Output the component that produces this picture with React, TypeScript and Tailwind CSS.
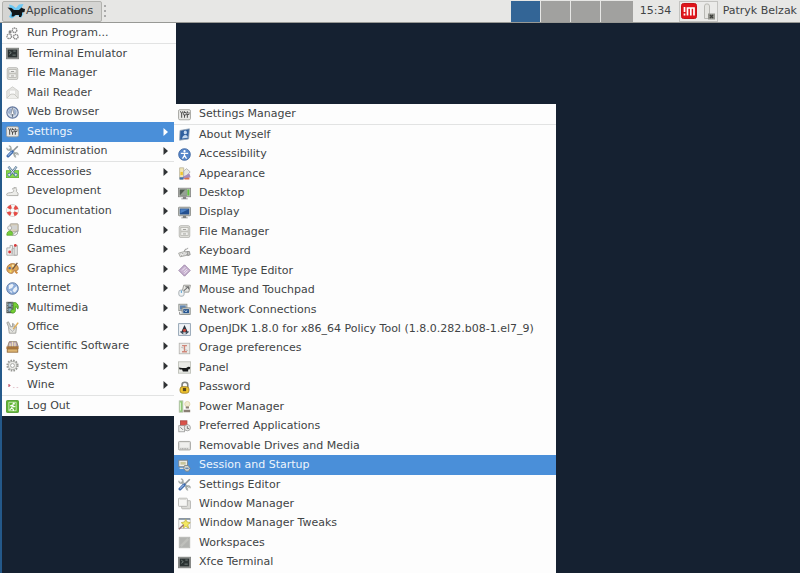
import type { ReactNode } from "react";

type Item = { label: string; icon: string; arrow?: boolean; active?: boolean };

const toggles = (
  <>
    <rect x="0.6" y="2" width="14.8" height="12.5" rx="1.8" fill="#e6e6e4" stroke="#9c9c98" />
    <path d="M3 4l1.5 3L6 4M4.5 7v5M8 4v8M11.5 4v8" stroke="#3a3a3a" strokeWidth="1.1" fill="none" />
    <path d="M7 5.5h3v3H7zM10.5 8h3v-3" stroke="#3a3a3a" strokeWidth="1" fill="#fff" />
  </>
);
const terminal = (
  <>
    <rect x="0.5" y="1.5" width="15" height="13" fill="#8e908e" stroke="#7c7e7c" />
    <rect x="2.2" y="3.2" width="11.6" height="9.6" fill="#2b3232" />
    <path d="M4 5l2.5 2L4 9M8 10h4M9 5h3" stroke="#83908d" fill="none" />
  </>
);
const cabinet = (
  <>
    <rect x="1.5" y="0.8" width="13" height="14.7" rx="2" fill="#deded9" stroke="#b2b2ad" />
    <rect x="3.5" y="3" width="9" height="4.5" fill="#f4f4f1" stroke="#b5b5b0" />
    <rect x="3.5" y="8.5" width="9" height="4.5" fill="#f4f4f1" stroke="#b5b5b0" />
    <path d="M6 5.5h4M6 11h4" stroke="#8a8a86" />
  </>
);
const tools = (
  <>
    <path d="M4 4l8.5 8.5" stroke="#8f9693" strokeWidth="3" />
    <path d="M4 4l8.5 8.5" stroke="#e3e7e5" strokeWidth="1.6" />
    <path d="M1 3.5c0 3 3 3.5 4.5 2S6 1.5 3.5 1.2" stroke="#a0a6a3" strokeWidth="1.6" fill="none" />
    <path d="M15 12.5c0-3-3-3.5-4.5-2s0 4.2 2 4.3" stroke="#a0a6a3" strokeWidth="1.6" fill="none" />
    <path d="M14.5 1.5L8 8" stroke="#8b9296" strokeWidth="2" />
    <path d="M7.5 8.5L2.5 13.5" stroke="#3f6cae" strokeWidth="3.8" strokeLinecap="round" />
    <path d="M7 8.5l-4.500 4.500" stroke="#9cbbe4" strokeWidth="1.4" />
  </>
);

const icons: Record<string, ReactNode> = {
  toggles,
  terminal,
  cabinet,
  tools,
  run: (
    <g fill="none" stroke="#858585" strokeWidth="1.7">
      <circle cx="10.5" cy="4" r="2.8" strokeDasharray="1.6 .6" />
      <circle cx="4" cy="11.5" r="2.8" strokeDasharray="1.6 .6" />
      <circle cx="12" cy="12" r="2.8" strokeDasharray="1.6 .6" />
      <circle cx="5" cy="6" r="1" />
    </g>
  ),
  mail: (
    <>
      <path d="M1 6l7-5 7 5v9H1z" fill="#e7e7e4" stroke="#c8c8c4" />
      <path d="M4 5h8v5l-4 2-4-2z" fill="#fafaf9" stroke="#d5d5d1" />
      <path d="M1 15l5-5h4l5 5" fill="#eeeeeb" stroke="#c0c0bb" />
    </>
  ),
  web: (
    <>
      <circle cx="8" cy="8" r="7" fill="#d3ddea" stroke="#6579a0" strokeWidth="1.4" />
      <path d="M4 4c3-2 4 0 3 3l-3 3-2-2zM10 3l3 3-1 5-3-2z" fill="#9db1cf" />
      <path d="M8 2l2 9H6z" fill="#fff" stroke="#6c7686" strokeWidth=".8" />
      <path d="M8 10v4" stroke="#4e5e75" />
    </>
  ),
  accessories: (
    <>
      <rect x="0.5" y="7" width="15" height="8.5" fill="#86d84b" stroke="#64b32d" />
      <path d="M3 2l8 10M13 2L5 12" stroke="#4f7391" strokeWidth="2.8" />
      <path d="M3 2l8 10M13 2L5 12" stroke="#e3eaf0" strokeWidth="1.2" />
      <circle cx="4" cy="12" r="1.9" fill="#e9f3e2" stroke="#3b7097" />
      <circle cx="12" cy="12" r="1.9" fill="#e9f3e2" stroke="#3b7097" />
    </>
  ),
  development: (
    <>
      <path d="M0.8 12c0-3 4-2 7-3 2.500-1 2-3 0-4l2-2c3 0 4 2 3 5l2 2v3H3c-1.500 0-2.200 0-2.200-1z" fill="#ecece9" stroke="#a5a5a0" />
      <path d="M9 4.500l4-1.500" stroke="#b2b2ae" />
    </>
  ),
  documentation: (
    <>
      <circle cx="8" cy="8" r="5.2" fill="none" stroke="#b9bab7" strokeWidth="5" />
      <circle cx="8" cy="8" r="5.2" fill="none" stroke="#f7f7f5" strokeWidth="4" />
      <circle cx="8" cy="8" r="5.2" fill="none" stroke="#e54a44" strokeWidth="4.4" strokeDasharray="4.08 4.08" strokeDashoffset="-2" />
    </>
  ),
  education: (
    <>
      <rect x="5" y="1" width="10" height="10" rx="1" fill="#d9cfb9" stroke="#9c9a92" />
      <rect x="7" y="3" width="6.500" height="5" fill="#d2d3d3" />
      <circle cx="4.500" cy="6" r="2.500" fill="#f0f0ee" stroke="#a5a5a5" />
      <path d="M1 15c0-7 7-7 8 0z" fill="#78cf3c" stroke="#57a22c" />
      <path d="M8 14.500l6-5v4l-3 2z" fill="#f4f4f2" stroke="#9a9a9a" />
    </>
  ),
  games: (
    <>
      <path d="M1 6h4V3h3v4h5v8H1z" fill="#f0f0ee" stroke="#a2a2a2" />
      <path d="M10 4l4-1v12h-4z" fill="#e3e3e1" stroke="#a8a8a8" />
      <circle cx="4.500" cy="11" r="1.800" fill="#d83a3c" />
      <circle cx="11.500" cy="3" r="1.700" fill="#d83a3c" />
      <path d="M7.500 7v7" stroke="#888" />
    </>
  ),
  graphics: (
    <>
      <path d="M1 9c0-9 13-9 14-2 1 6-6 2-6 5 0 4-8 2-8-3z" fill="#dda558" stroke="#a9743c" />
      <circle cx="4.500" cy="7.500" r="1.500" fill="#3f6fae" />
      <circle cx="8.500" cy="4.500" r="1.500" fill="#f7e7a9" />
      <circle cx="5.500" cy="11.500" r="1.300" fill="#f5e35f" />
      <path d="M14 1L8 9" stroke="#6b5442" strokeWidth="1.600" />
      <path d="M11 11l3 3" stroke="#d08a3c" strokeWidth="2.400" />
    </>
  ),
  internet: (
    <>
      <circle cx="8" cy="8" r="7.2" fill="#8eadd9" stroke="#56749f" />
      <path d="M3.500 4l4-2 2 2-2 3.500-4 1.500zM9.500 8l3.500-3 1 4-3 4-3-2zM4 10l3 1.500v2.500z" fill="#eaf1f9" />
    </>
  ),
  multimedia: (
    <>
      <rect x="0.5" y="1" width="8.500" height="14" fill="#525b5b" />
      <path d="M2 2v12M7.500 2v12" stroke="#dce4df" strokeDasharray="1 1" />
      <rect x="3" y="3" width="3.500" height="4" fill="#8aaec4" />
      <rect x="3" y="9" width="3.500" height="4" fill="#8aaec4" />
      <path d="M9 2h3c3 2 4 5 2.500 8-1-2-1.500-3-3-3v5c0 4-7 3.500-5.500 0 1-2 3-1.500 3-1.500z" fill="#76cf35" stroke="#43941d" />
    </>
  ),
  office: (
    <>
      <path d="M3 7h10l-1 8H4z" fill="#e4e4df" stroke="#999994" />
      <path d="M3 7L1 2l2-1 3 6M8 7V3l2 1v3" fill="#d6d7d2" stroke="#969691" />
      <path d="M9 10l6-8" stroke="#e0ad55" strokeWidth="2" />
      <path d="M4 9l4 4 4-5" stroke="#aaa" fill="none" />
    </>
  ),
  science: (
    <>
      <path d="M2 8l2-6h9l2 6z" fill="#b29cb8" stroke="#8b7a5e" />
      <path d="M5 4v4M8 2v6M11 3v5" stroke="#ecdfb6" strokeWidth="1.7" />
      <rect x="0.5" y="8" width="15" height="3" fill="#aa743a" />
      <rect x="1.5" y="11" width="13" height="4" fill="#ddb572" stroke="#8f6433" />
    </>
  ),
  system: (
    <>
      <circle cx="8" cy="8" r="6.4" fill="none" stroke="#979894" strokeWidth="2.2" strokeDasharray="2 1.350" />
      <circle cx="8" cy="8" r="5" fill="#ecece9" stroke="#9d9e99" />
      <circle cx="8" cy="8" r="2.400" fill="#fff" stroke="#9d9e99" />
    </>
  ),
  wine: (
    <>
      <path d="M3.500 6.500L5 8l-1.500 1.500z" fill="#c8455a" stroke="#bb5365" />
      <path d="M8.500 10.500h2M13 10.500h2" stroke="#dcb9c1" />
    </>
  ),
  logout: (
    <>
      <rect x="0.5" y="0.5" width="15" height="15" rx="1.5" fill="#60b532" stroke="#439020" />
      <path d="M3.500 2.800h9v10.400h-9z" fill="none" stroke="#d9f0cb" />
      <circle cx="9.500" cy="4.500" r="1.400" fill="#fff" />
      <path d="M5 7.500l3-1.500 1.500 2.500 2-.5M8 6.500l-1 3.500 2 1.500v2M7 10l-2.500 2" stroke="#fff" strokeWidth="1.400" fill="none" />
    </>
  ),
  about: (
    <>
      <path d="M2.500 3l11.500-2-1 12.500-11 1.500z" fill="#2f5f9e" stroke="#96a5b5" />
      <ellipse cx="9" cy="5.500" rx="1.900" ry="2.300" fill="#c3d7ee" />
      <path d="M5 13c.5-3 2-4 4-4.300 2 0 3 1 3 3.300z" fill="#c3d7ee" />
    </>
  ),
  accessibility: (
    <>
      <circle cx="8" cy="8" r="7.2" fill="#5586ca" stroke="#3b639c" />
      <circle cx="8" cy="4" r="1.4" fill="#fff" />
      <path d="M3.5 6.5h9M8 6v4M8 9l-2.5 4M8 9l2.5 4" stroke="#fff" strokeWidth="1.5" />
    </>
  ),
  appearance: (
    <>
      <path d="M2 1h5v14H2z" fill="#f2e6b4" stroke="#b8b09a" />
      <path d="M3 6h3v4H3z" fill="#efc52f" />
      <path d="M7 5l3.500-3 4.500 4-8 8z" fill="#e6e6e3" stroke="#aaa" />
      <path d="M6 12l8-4 1.500 4.500-9 2.500z" fill="#a58bbd" />
      <path d="M2 12.500h5l-1 3H2z" fill="#3f6fae" />
      <path d="M8 13.500l6-.5v2.500H8z" fill="#d9734b" />
    </>
  ),
  desktop: (
    <>
      <rect x="0.5" y="1.5" width="15" height="10.5" fill="#c2c3c0" stroke="#868784" />
      <rect x="2" y="3" width="9" height="7.500" fill="#4f5c50" />
      <path d="M2 10.500L9 3h2v7.500z" fill="#96a194" />
      <path d="M11.500 3H14v7.500h-2.500z" fill="#5fc13c" />
      <path d="M6 12h4v2h2v1H4v-1h2z" fill="#858585" />
    </>
  ),
  display: (
    <>
      <rect x="0.5" y="1.5" width="15" height="10.5" rx="1" fill="#c6c8c4" stroke="#80827e" />
      <rect x="2.2" y="3.2" width="11.600" height="7.200" fill="#24508f" />
      <path d="M3 4h10l-10 5z" fill="#4b80c4" />
      <path d="M6 12h4v2h2v1H4v-1h2z" fill="#808280" />
    </>
  ),
  keyboard: (
    <>
      <path d="M0.800 10l9-2.500 4 4.500-11 2.500z" fill="#ececea" stroke="#969793" />
      <path d="M3 11l7-1.500M4 13l8-1.500" stroke="#999" strokeWidth="1.100" strokeDasharray="1 1" />
      <path d="M8 7.500c0-4 4-1 4-4M11 8h3l1 4-3 1z" fill="#c4c4c0" stroke="#8a8a8a" />
    </>
  ),
  mime: (
    <>
      <path d="M8 1l7 7-7 7-7-7z" fill="#c6b1cf" stroke="#93799e" />
      <path d="M5 8l4-4M7 10l4-4M8 12l4-4" stroke="#f4edf6" strokeWidth="1.100" />
    </>
  ),
  mouse: (
    <>
      <path d="M7 1.500h8.300l-2 8.500H5z" fill="#e7e7e3" stroke="#8b8b87" />
      <path d="M7 8.500l5.500-5M9 3.500h4v3" stroke="#707070" strokeWidth="1.300" fill="none" />
      <rect x="1" y="7.500" width="6.500" height="7.500" rx="2.500" fill="#eff2f4" stroke="#9aa3a8" />
      <path d="M4.200 8v3" stroke="#6cadd6" strokeWidth="1.500" />
    </>
  ),
  network: (
    <>
      <rect x="1" y="1.500" width="10" height="8" fill="#d2d4d1" stroke="#878c87" />
      <rect x="2.5" y="3" width="7" height="5" fill="#5d83b0" />
      <rect x="5" y="6" width="10" height="8" fill="#d2d4d1" stroke="#7d827d" />
      <rect x="6.5" y="7.5" width="7" height="5" fill="#285690" />
      <path d="M8 9l2 2 1-2M2 12.500h4" stroke="#ddecf5" fill="none" />
      <path d="M2 11v3h3" stroke="#777" fill="none" />
    </>
  ),
  java: (
    <>
      <rect x="0.800" y="0.800" width="14.400" height="14.400" fill="#f0f3f6" stroke="#8195a8" />
      <path d="M8 2.500L12.500 12H3.500z" fill="#27323c" />
      <circle cx="8" cy="9" r="2" fill="#c9473b" />
      <path d="M3 10.500l3 2.500h4l3-2.500" stroke="#465665" strokeWidth="1.500" fill="none" />
      <path d="M6.500 12.500h3" stroke="#fff" strokeWidth="1.500" />
    </>
  ),
  orage: (
    <>
      <rect x="1.5" y="1.5" width="13" height="13" fill="#ecebe8" stroke="#b3b2ae" />
      <path d="M5 4.500h6M8 4.500v7.500M5 12h6" stroke="#cf8678" strokeWidth="1.600" />
      <path d="M4 6.500l3 1M9 9.500l3 1" stroke="#b0b0ac" />
    </>
  ),
  panel: (
    <>
      <rect x="0.5" y="1" width="15" height="14" fill="#e9eae6" stroke="#b9bcb4" />
      <path d="M1 8l4 .5h5l2.500-1.500 2.500.5-.5 2.500-2 .5v2.500H6l-1-2.500H2z" fill="#17191a" />
    </>
  ),
  password: (
    <>
      <path d="M5 8V4.500c0-4 7-4 7 0V8" fill="none" stroke="#82837e" strokeWidth="2" />
      <rect x="2.5" y="7" width="11" height="8" rx="3" fill="#f0c42f" stroke="#9a7a1c" />
      <path d="M6 8.500h4v4H6z" fill="#5c4a1c" />
    </>
  ),
  power: (
    <>
      <rect x="1.500" y="1" width="4.500" height="14" fill="#8ec974" stroke="#b9c3b1" />
      <path d="M2.500 3h1.200v10H2.500z" fill="#d9f2cd" />
      <circle cx="11.500" cy="5" r="3.200" fill="#f1ecd2" stroke="#ddd2a8" />
      <path d="M9.500 8h4v2.500h-4zM7 12h8v3H7z" fill="#8a7f74" />
    </>
  ),
  preferred: (
    <>
      <rect x="3" y="1" width="8" height="9" fill="#d9534a" stroke="#a84640" />
      <rect x="1" y="7" width="7" height="7.500" fill="#eff0ee" stroke="#999" />
      <circle cx="11.500" cy="9.500" r="3.800" fill="#e9e9e5" stroke="#999" />
      <path d="M3 9l3 3M11.500 7.500v3h2" stroke="#707070" strokeWidth="1.100" fill="none" />
    </>
  ),
  drive: (
    <>
      <rect x="0.5" y="3" width="15" height="10.5" rx="1.5" fill="#dcdcd9" stroke="#9a9a96" />
      <rect x="2.5" y="4.5" width="11" height="6" fill="#efefed" />
      <path d="M3 12h9" stroke="#8a8a8a" strokeDasharray="1 1" />
    </>
  ),
  session: (
    <>
      <rect x="1" y="1.500" width="10.500" height="8" fill="#eeefec" stroke="#7c7f7c" />
      <rect x="3" y="3.500" width="6.500" height="3.500" fill="#c9c69b" />
      <path d="M2 11.500h6" stroke="#dfe2de" strokeWidth="1.500" />
      <path d="M8 8h4.500l2.500 3.500-2 3.500H9.500L7 11.500z" fill="#d3d6d0" stroke="#7c7f7c" />
      <path d="M9 11.500h4" stroke="#6587ae" strokeWidth="1.800" />
    </>
  ),
  windows: (
    <>
      <rect x="4.5" y="4.5" width="11" height="10" rx="1" fill="#dcdcd8" stroke="#adada9" />
      <rect x="0.5" y="1.5" width="11" height="10" rx="1" fill="#f6f6f4" stroke="#adada9" />
      <path d="M2 3h8" stroke="#d2d2ce" />
    </>
  ),
  tweaks: (
    <>
      <rect x="1" y="2" width="14" height="12" fill="#fafaf8" stroke="#b9b9b5" />
      <path d="M1 2.500h14" stroke="#5c6f86" strokeWidth="1.500" />
      <path d="M9.500 3l1.500 3 4 1-3 2.500 1 4-3.500-2-3 2 .5-4L4 7l4-1z" fill="#f5e95f" stroke="#bfb13c" />
      <path d="M1 15l6-5.500" stroke="#9a7474" strokeWidth="1.800" />
    </>
  ),
  workspaces: (
    <>
      <rect x="1.500" y="1.5" width="13" height="13" fill="#b2b3b0" stroke="#b9bab6" />
      <path d="M3.500 12.500l9-9" stroke="#bfc0bc" strokeWidth="3" />
    </>
  ),
};

const menuGroups: { height: string; items: Item[] }[] = [
  { height: "h-5", items: [{ label: "Run Program...", icon: "run" }] },
  {
    height: "h-[117px]",
    items: [
      { label: "Terminal Emulator", icon: "terminal" },
      { label: "File Manager", icon: "cabinet" },
      { label: "Mail Reader", icon: "mail" },
      { label: "Web Browser", icon: "web" },
      { label: "Settings", icon: "toggles", arrow: true, active: true },
      { label: "Administration", icon: "tools", arrow: true },
    ],
  },
  {
    height: "h-[233px]",
    items: [
      { label: "Accessories", icon: "accessories", arrow: true },
      { label: "Development", icon: "development", arrow: true },
      { label: "Documentation", icon: "documentation", arrow: true },
      { label: "Education", icon: "education", arrow: true },
      { label: "Games", icon: "games", arrow: true },
      { label: "Graphics", icon: "graphics", arrow: true },
      { label: "Internet", icon: "internet", arrow: true },
      { label: "Multimedia", icon: "multimedia", arrow: true },
      { label: "Office", icon: "office", arrow: true },
      { label: "Scientific Software", icon: "science", arrow: true },
      { label: "System", icon: "system", arrow: true },
      { label: "Wine", icon: "wine", arrow: true },
    ],
  },
  { height: "h-5", items: [{ label: "Log Out", icon: "logout" }] },
];

const settingsGroups: { height: string; items: Item[] }[] = [
  { height: "h-5", items: [{ label: "Settings Manager", icon: "toggles" }] },
  {
    height: "h-[447px]",
    items: [
      { label: "About Myself", icon: "about" },
      { label: "Accessibility", icon: "accessibility" },
      { label: "Appearance", icon: "appearance" },
      { label: "Desktop", icon: "desktop" },
      { label: "Display", icon: "display" },
      { label: "File Manager", icon: "cabinet" },
      { label: "Keyboard", icon: "keyboard" },
      { label: "MIME Type Editor", icon: "mime" },
      { label: "Mouse and Touchpad", icon: "mouse" },
      { label: "Network Connections", icon: "network" },
      { label: "OpenJDK 1.8.0 for x86_64 Policy Tool (1.8.0.282.b08-1.el7_9)", icon: "java" },
      { label: "Orage preferences", icon: "orage" },
      { label: "Panel", icon: "panel" },
      { label: "Password", icon: "password" },
      { label: "Power Manager", icon: "power" },
      { label: "Preferred Applications", icon: "preferred" },
      { label: "Removable Drives and Media", icon: "drive" },
      { label: "Session and Startup", icon: "session", active: true },
      { label: "Settings Editor", icon: "tools" },
      { label: "Window Manager", icon: "windows" },
      { label: "Window Manager Tweaks", icon: "tweaks" },
      { label: "Workspaces", icon: "workspaces" },
      { label: "Xfce Terminal", icon: "terminal" },
    ],
  },
];

function MenuItem({ label, icon, arrow, active }: Item) {
  return (
    <button
      role="menuitem"
      className={`flex w-full min-h-0 items-center gap-2 pr-2 pl-1 text-left leading-4 ${
        active ? "bg-[#4a8fd9] text-[#eef5fc]" : "text-[#414445]"
      }`}
    >
      <svg viewBox="0 0 16 16" className="size-[13px] shrink-0" aria-hidden="true">
        {icons[icon]}
      </svg>
      <span className="grow whitespace-nowrap">{label}</span>
      {arrow && (
        <svg viewBox="0 0 5 8" className={`h-2 w-[5px] shrink-0 ${active ? "text-white" : "text-[#303335]"}`} aria-hidden="true">
          <path d="M0.500 0L5 4L0.500 8z" fill="currentColor" />
        </svg>
      )}
    </button>
  );
}

function Menu({ groups, label, className }: { groups: { height: string; items: Item[] }[]; label: string; className: string }) {
  return (
    <div role="menu" aria-label={label} className={`divide-y divide-[#e2e3e3] bg-[#fdfdfd] ${className}`}>
      {groups.map((group) => (
        <div key={group.items[0].label} className={`box-content grid auto-rows-fr ${group.height}`}>
          {group.items.map((item) => (
            <MenuItem key={item.label} {...item} />
          ))}
        </div>
      ))}
    </div>
  );
}

function Mascot() {
  return (
    <svg viewBox="0 0 18 16" className="h-4 w-[18px] shrink-0" aria-hidden="true">
      <path d="M2 1.500l3.500 1 3.500 2.500L12 1.500l4.500-.5-2.500 5 2.500 5-2.500 4-4-3-5 3.500-3-1.500 2-4z" fill="#6cc8f4" />
      <path d="M0.500 4.500l4 .5 2.500 2h5l2.500-2.500 1.500 1 2 .5-.5 3-2.500.5v2.500l-1 2h-2v-2H8.500l-2 1.500H4.500l.5-3.500L3 7z" fill="#111619" />
    </svg>
  );
}

function TopPanel() {
  return (
    <header className="flex h-[23px] shrink-0 items-center border-b border-[#989995] bg-[#e7e7e5] text-[#414445]">
      <button className="ml-0.5 flex h-[21px] w-[100px] items-center gap-px rounded-xs border border-[#b2b2ae] bg-[#d5d5d3] pl-1">
        <Mascot />
        <span>Applications</span>
      </button>
      <span className="ml-0.5 flex flex-col gap-[3px]" aria-hidden="true">
        <i className="size-0.5 bg-[#aaa]" />
        <i className="size-0.5 bg-[#aaa]" />
        <i className="size-0.5 bg-[#aaa]" />
      </span>
      <nav aria-label="Workspaces" className="ml-auto flex h-[21px] gap-px">
        <button aria-label="Workspace 1" className="w-[29px] bg-[#336596]" />
        <button aria-label="Workspace 2" className="w-[29px] bg-[#a1a19f]" />
        <button aria-label="Workspace 3" className="w-[29px] bg-[#a1a19f]" />
        <button aria-label="Workspace 4" className="w-8 bg-[#a1a19f]" />
      </nav>
      <time className="ml-[7px] w-[39px]">15:34</time>
      <div className="flex h-[21px] w-[39px] items-center gap-1.5 border border-[#c3c3c0] bg-[#ebebe9] pl-px">
        <svg viewBox="0 0 16 16" className="size-4" aria-hidden="true">
          <rect x="0.500" y="0.500" width="15" height="15" rx="2" fill="#e0151b" stroke="#c4141a" />
          <path d="M3.500 4v5M3.500 10.500v2M6.500 12.500V5h6.500v7.500M9.800 5v7.500" stroke="#fff" strokeWidth="1.700" fill="none" />
        </svg>
        <svg viewBox="0 0 12 17" className="h-[17px] w-3" aria-hidden="true">
          <path d="M1.5 15.500V3l1-2h3l1 2v12.500z" fill="#e5e5e1" stroke="#b9b9b4" />
          <rect x="5" y="10.500" width="7" height="6" fill="#92938d" />
          <path d="M7 12l3 3M10 12l-3 3" stroke="#3c3d39" strokeWidth="1.400" />
        </svg>
      </div>
      <button className="mr-[3px] ml-[5px] whitespace-nowrap">Patryk Belzak</button>
    </header>
  );
}

export default function App() {
  return (
    <div className="flex h-screen flex-col overflow-hidden bg-[#152131] font-['DejaVu_Sans',sans-serif] text-[11px]">
      <TopPanel />
      <main className="flex min-h-0 grow border-l-2 border-[#24598a]">
        <Menu groups={menuGroups} label="Applications" className="w-[174px] shrink-0 self-start" />
        <Menu groups={settingsGroups} label="Settings" className="-ml-0.5 mt-[81px] w-[382px] shrink-0" />
      </main>
    </div>
  );
}
